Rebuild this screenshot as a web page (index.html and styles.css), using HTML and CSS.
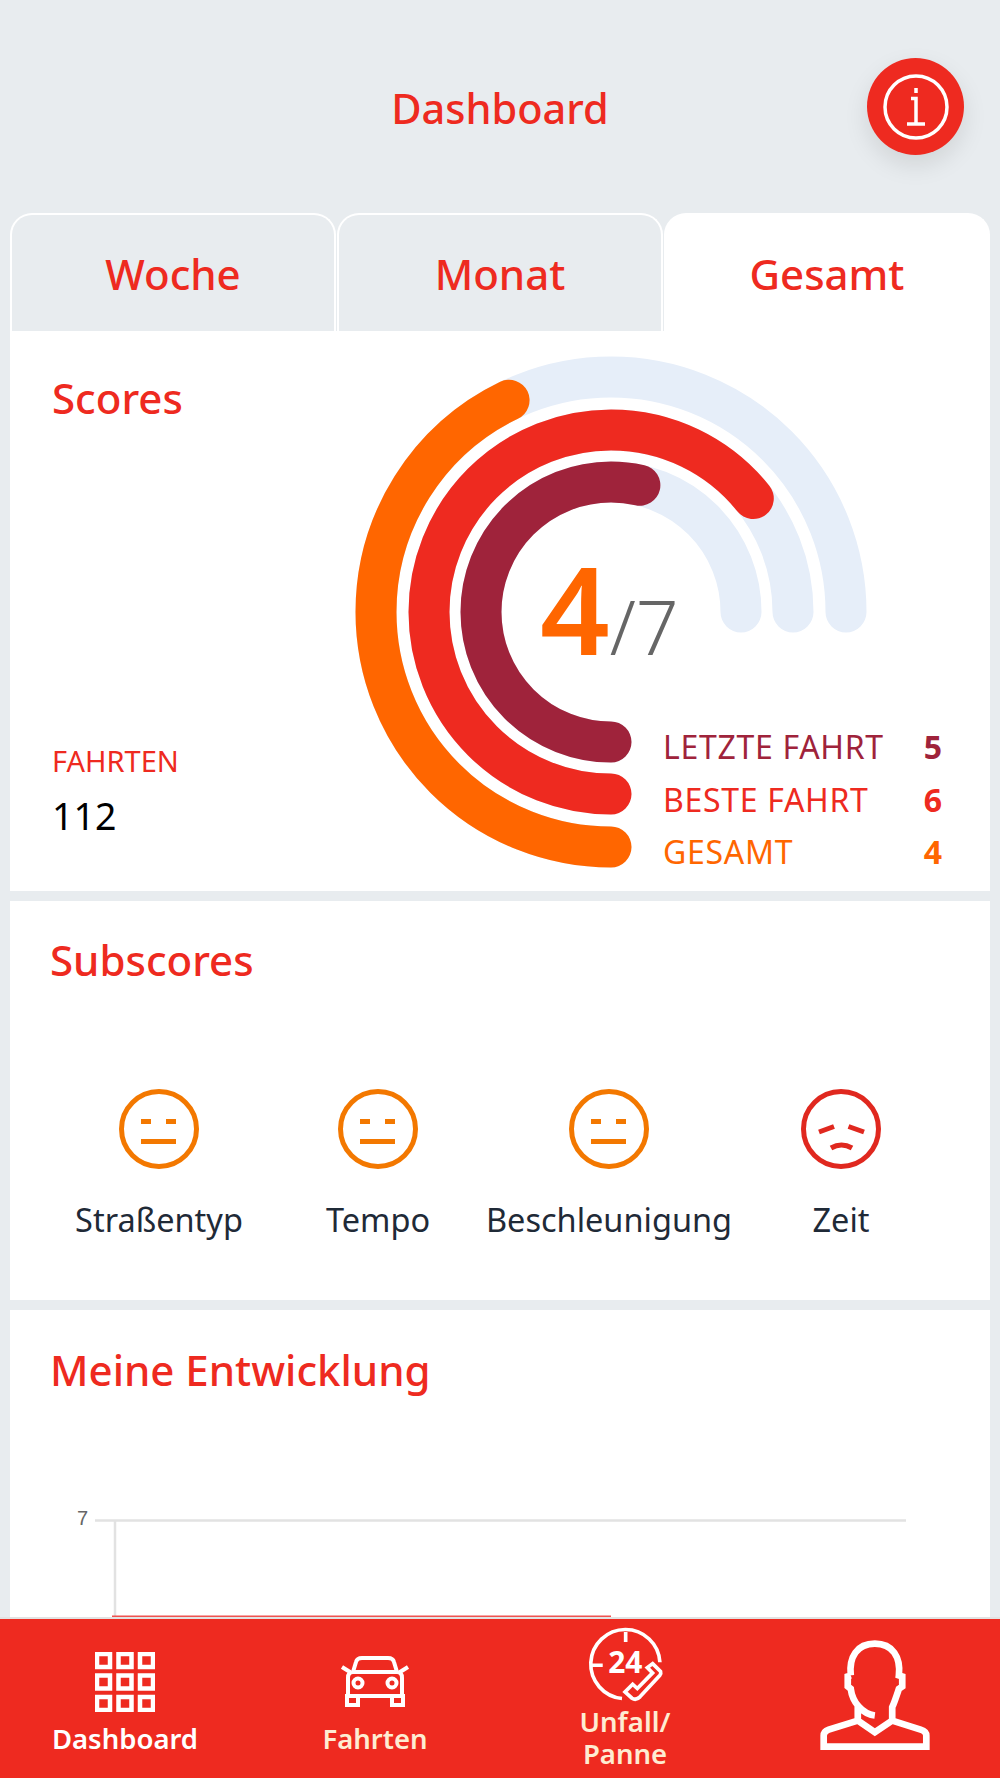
FILE: index.html
```html
<!DOCTYPE HTML>
<html>
    <head>
        <title>Dashboard</title>
        <link rel="stylesheet" href="styles.css">
    </head>
    <body>
        <div class="app">

            <div class="content">

                <header class="top-bar">
                    <h1 class="page-title">Dashboard</h1>
                    <button class="info-button">
                        <svg class="info-icon" viewBox="0 0 66 66">
                            <circle cx="33" cy="33" r="31" />
                            <path d="M33 14v5M28 24.500h5v25M24 50h18" />
                        </svg>
                    </button>
                </header>

                <div class="tabs">
                    <div class="tab">Woche</div>
                    <div class="tab">Monat</div>
                    <div class="tab tab-active">Gesamt</div>
                </div>

                <!-- scores -->
                <section class="card card-scores">
                    <div class="scores-left">
                        <h2 class="card-title">Scores</h2>
                        <div class="trips">
                            <div class="trips-label">FAHRTEN</div>
                            <div class="trips-number">112</div>
                        </div>
                    </div>
                    <div class="gauge">
                        <svg class="gauge-rings" viewBox="0 0 540 540">
                            <path class="track" d="M271 507A235 235 0 1 1 506 272" />
                            <path class="track" d="M271 454A182 182 0 1 1 453 272" />
                            <path class="track" d="M271 402A130 130 0 1 1 401 272" />
                            <path class="ring ring-total" pathLength="7" d="M271 507A235 235 0 1 1 506 272" />
                            <path class="ring ring-best" pathLength="7" d="M271 454A182 182 0 1 1 453 272" />
                            <path class="ring ring-last" pathLength="7" d="M271 402A130 130 0 1 1 401 272" />
                        </svg>
                        <div class="gauge-value"><span class="gauge-score">4</span><span class="gauge-max">/7</span></div>
                        <div class="legend">
                            <div class="legend-row color-last"><span>LETZTE FAHRT</span><b>5</b></div>
                            <div class="legend-row color-best"><span>BESTE FAHRT</span><b>6</b></div>
                            <div class="legend-row color-total"><span>GESAMT</span><b>4</b></div>
                        </div>
                    </div>
                </section>

                <!-- subscores -->
                <section class="card card-subscores">
                    <h2 class="card-title">Subscores</h2>
                    <div class="subscores">
                        <div class="subscore">
                            <svg class="smiley smiley-ok" viewBox="0 0 80 80">
                                <circle cx="40" cy="40" r="37.5" />
                                <path d="M22 32.5h10M47 32.5h10M22 52.5h35" />
                            </svg>
                            <span>Straßentyp</span>
                        </div>
                        <div class="subscore">
                            <svg class="smiley smiley-ok" viewBox="0 0 80 80">
                                <circle cx="40" cy="40" r="37.5" />
                                <path d="M22 32.5h10M47 32.5h10M22 52.5h35" />
                            </svg>
                            <span>Tempo</span>
                        </div>
                        <div class="subscore">
                            <svg class="smiley smiley-ok" viewBox="0 0 80 80">
                                <circle cx="40" cy="40" r="37.5" />
                                <path d="M22 32.5h10M47 32.5h10M22 52.5h35" />
                            </svg>
                            <span>Beschleunigung</span>
                        </div>
                        <div class="subscore">
                            <svg class="smiley smiley-bad" viewBox="0 0 80 80">
                                <circle cx="40" cy="40" r="37.5" />
                                <path d="M18 43L33 37.500M47.500 37.500L63 43M30 59Q40.500 53 51 59" />
                            </svg>
                            <span>Zeit</span>
                        </div>
                    </div>
                </section>

                <!-- chart, runs on below the nav -->
                <section class="card card-chart">
                    <h2 class="card-title">Meine Entwicklung</h2>
                    <svg class="chart" viewBox="0 -10 980 130">
                        <text class="chart-tick" x="67" y="16">7</text>
                        <path class="chart-grid" d="M85 11.500H896M105 11.500V120" />
                        <path class="chart-line" d="M102 107.500H601" />
                    </svg>
                </section>

            </div>

            <nav class="bottom-nav">
                <div class="nav-item nav-active">
                    <svg class="nav-icon icon-grid" viewBox="0 0 60 60">
                        <rect x="2" y="2" width="13" height="13" />
                        <rect x="23.500" y="2" width="13" height="13" />
                        <rect x="45" y="2" width="13" height="13" />
                        <rect x="2" y="23.500" width="13" height="13" />
                        <rect x="23.500" y="23.500" width="13" height="13" />
                        <rect x="45" y="23.500" width="13" height="13" />
                        <rect x="2" y="45" width="13" height="13" />
                        <rect x="23.500" y="45" width="13" height="13" />
                        <rect x="45" y="45" width="13" height="13" />
                    </svg>
                    <span>Dashboard</span>
                </div>
                <div class="nav-item">
                    <svg class="nav-icon icon-car" viewBox="0 0 70 52">
                        <path d="M13 17L16 7Q17 3 22 3H48Q53 3 54 7L57 17M2 12L10 17M68 12L60 17M8 41V23Q8 17 13 17H57Q62 17 62 23V41ZM7 41H18V50H7ZM52 41H63V50H52Z" />
                        <circle cx="18" cy="28" r="4.500" />
                        <circle cx="52" cy="28" r="4.500" />
                    </svg>
                    <span>Fahrten</span>
                </div>
                <div class="nav-item nav-item-help">
                    <svg class="nav-icon icon-help" viewBox="255 140 240 230">
                        <path d="M480 246A104 104 0 1 0 366 355M377 155V185M272 255H308" />
                        <text x="376" y="279">24</text>
                        <path d="M458 250L482 274Q484 280 480 285L420 350Q408 362 396 354L375 335L398 312L412 325L458 278L442 262Z" />
                    </svg>
                    <span>Unfall/<br>Panne</span>
                </div>
                <div class="nav-item">
                    <svg class="nav-icon icon-person" viewBox="950 180 350 350">
                        <path d="M1051 295C1045 240 1070 200 1123 200C1176 200 1201 240 1195 295L1205 298V328L1195 335C1190 350 1182 375 1175 390V430L1260 457Q1277 462 1277 475V508H970V475Q970 462 985 457L1072 430V385M1051 295L1042 298V328L1051 335C1056 375 1085 410 1123 415M1072 430L1123 465L1175 430" />
                    </svg>
                </div>
            </nav>

        </div>
    </body>
</html>
```
FILE: styles.css
```css
*{
    margin: 0;
    padding: 0;
    box-sizing: border-box;
}

body, html{
    height: 100%;
    font-family: "Noto Sans", sans-serif;
    background: #e8ecef;
}

.app{
    height: 100%;
    display: flex;
    flex-direction: column;
    overflow: hidden;
}

.content{
    flex: 1;
    min-height: 0;
    overflow: hidden;
    padding: 0 10px;
}

/* header */

.top-bar{
    height: 213px;
    display: flex;
    align-items: flex-start;
    justify-content: center;
    position: relative;
}

.page-title{
    margin-top: 78px;
    font-size: 41.500px;
    line-height: 60px;
    font-weight: 500;
    color: #ee2a20;
}

.info-button{
    position: absolute;
    right: 26px;
    top: 58px;
    width: 97px;
    height: 97px;
    border: 0;
    border-radius: 50%;
    background: #ee2a20;
    box-shadow: 0 10px 24px rgba(0, 0, 0, 0.1);
    display: flex;
    align-items: center;
    justify-content: center;
}

.info-icon{
    width: 66px;
    height: 66px;
    fill: none;
    stroke: #fff;
    stroke-width: 3.5;
}

/* tabs */

.tabs{
    height: 118px;
    display: flex;
    gap: 1px;
}

.tab{
    flex: 1;
    display: flex;
    align-items: center;
    justify-content: center;
    font-size: 42px;
    font-weight: 500;
    color: #ee2a20;
    border: 2px solid #fff;
    border-bottom: 0;
    border-radius: 22px 22px 0 0;
}

.tab-active{
    background: #fff;
}

/* cards */

.card{
    background: #fff;
    margin-bottom: 10px;
}

.card-title{
    font-size: 42px;
    line-height: 54px;
    font-weight: 500;
    color: #ee2a20;
}

.card-scores{
    height: 560px;
    display: flex;
}

.scores-left{
    width: 330px;
    padding: 40px 0 52px 42px;
    display: flex;
    flex-direction: column;
    justify-content: space-between;
}

.trips-label{
    font-size: 29px;
    line-height: 40px;
    color: #ee2a20;
}

.trips-number{
    margin-top: 12px;
    font-size: 37.500px;
    line-height: 46px;
    color: #000;
}

/* gauge */

.gauge{
    position: relative;
    width: 640px;
}

.gauge-rings{
    display: block;
    width: 540px;
    height: 540px;
    margin-top: 9px;
    fill: none;
    stroke-width: 41;
    stroke-linecap: round;
}

.track{
    stroke: #e6eef9;
}

.ring{
    stroke-dasharray: 4 7;
}

.ring-total{
    stroke: #ff6600;
}

.ring-best{
    stroke: #ee2a20;
    stroke-dasharray: 6 7;
}

.ring-last{
    stroke: #9f233b;
    stroke-dasharray: 5 7;
}

.gauge-value{
    position: absolute;
    left: 200px;
    top: 202px;
    display: flex;
    align-items: baseline;
}

.gauge-score{
    font-size: 122px;
    line-height: 150px;
    font-weight: 600;
    color: #ff6600;
}

.gauge-max{
    font-size: 75px;
    line-height: 150px;
    font-weight: 300;
    color: #666;
}

.legend{
    position: absolute;
    left: 323px;
    top: 390px;
    width: 279px;
}

.legend-row{
    display: flex;
    justify-content: space-between;
    height: 52.5px;
    line-height: 52px;
    font-size: 32px;
}

.legend-row span{
    letter-spacing: 0.7px;
}

.legend-row b{
    font-weight: 700;
}

.color-last{
    color: #9f233b;
}

.color-best{
    color: #ee2a20;
}

.color-total{
    color: #ff6600;
}

/* subscores */

.card-subscores{
    height: 399px;
    padding: 32px 40px 0;
}

.subscores{
    display: grid;
    grid-template-columns: 218px 220px 242px 222px;
    margin-top: 102px;
}

.subscore{
    display: flex;
    flex-direction: column;
    align-items: center;
    gap: 26px;
    font-size: 32.500px;
    line-height: 50px;
    color: #1f2a37;
}

.smiley{
    width: 80px;
    height: 80px;
    fill: none;
    stroke-width: 5;
}

.smiley-ok{
    stroke: #f37800;
}

.smiley-bad{
    stroke: #e0281f;
}

/* chart */

.card-chart{
    height: 500px;
    padding-top: 33px;
}

.card-chart .card-title{
    padding-left: 40px;
}

.chart{
    display: block;
    width: 980px;
    height: 130px;
    margin-top: 102px;
}

.chart-tick{
    font-family: "Liberation Sans", sans-serif;
    font-size: 20px;
    fill: #666;
}

.chart-grid{
    fill: none;
    stroke: #e2e2e2;
    stroke-width: 2.5;
}

.chart-line{
    fill: none;
    stroke: #ef5350;
    stroke-width: 2;
}

/* bottom nav */

.bottom-nav{
    height: 161px;
    flex: none;
    display: grid;
    grid-template-columns: 250px 250px 250px 250px;
    background: #ee2a20;
    border-top: 2px solid #e2e2e2;
    color: #feecd2;
    font-size: 27.500px;
    font-weight: 600;
    line-height: 32px;
    text-align: center;
}

.nav-item{
    display: flex;
    flex-direction: column;
    align-items: center;
}

.nav-active{
    color: #fff;
}

.nav-icon{
    display: block;
    fill: none;
    stroke: #fff;
}

.icon-grid{
    width: 60px;
    height: 60px;
    margin-top: 33px;
    margin-bottom: 11px;
    stroke-width: 4.500;
}

.icon-car{
    width: 70px;
    height: 52px;
    margin-top: 36px;
    margin-bottom: 16px;
    stroke-width: 4;
}

.icon-help{
    width: 80px;
    height: 76.500px;
    margin-top: 8px;
    margin-bottom: 2px;
    stroke-width: 11;
}

.icon-help text{
    font-family: "Noto Sans", sans-serif;
    font-size: 90px;
    font-weight: 700;
    fill: #fff;
    stroke: none;
    text-anchor: middle;
}

.icon-person{
    width: 117px;
    height: 117px;
    margin-top: 18px;
    stroke-width: 20;
}
```
